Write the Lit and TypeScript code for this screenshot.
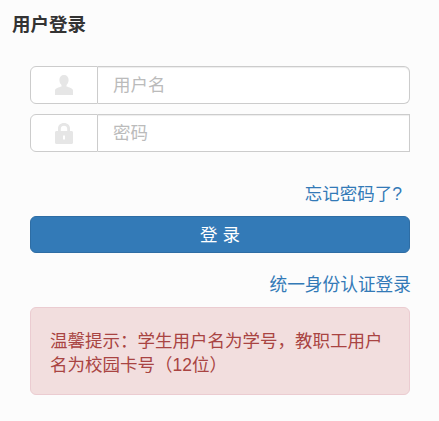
import { LitElement, html, css } from "lit";
import { customElement } from "lit/decorators.js";

@customElement("app-root")
export class AppRoot extends LitElement {
  static styles = css`
    :host {
      display: block;
      width: 439px;
      height: 421px;
      background: #fcfcfc;
      font-family: "Liberation Sans", "Noto Sans CJK SC", sans-serif;
      box-sizing: border-box;
      overflow: hidden;
    }
    .title {
      margin: 0;
      padding: 12px 0 0 12px;
      font-size: 18.5px;
      line-height: 26px;
      font-weight: 700;
      color: #333;
    }
    .form {
      display: flex;
      flex-direction: column;
      margin: 28px 29px 0 30px;
    }
    .group {
      display: flex;
      height: 38px;
      box-sizing: border-box;
      margin-bottom: 10px;
    }
    .addon {
      width: 68px;
      box-sizing: border-box;
      flex: none;
      display: flex;
      align-items: center;
      justify-content: center;
      border: 1px solid #ccc;
      border-radius: 6px 0 0 6px;
      background: #fff;
    }
    .input {
      flex: 1;
      box-sizing: border-box;
      border: 1px solid #ccc;
      border-left: 0;
      background: #fff;
      box-shadow: inset 0 1px 1px rgba(0, 0, 0, 0.075);
      padding-left: 15px;
      font-size: 17.5px;
      line-height: 36px;
      color: #bbb;
    }
    .input.round {
      border-radius: 0 6px 6px 0;
    }
    .forgot {
      align-self: flex-end;
      margin: 19px 8px 0 0;
      font-size: 17.5px;
      line-height: 26px;
      color: #337ab7;
    }
    .btn {
      margin-top: 9px;
      height: 37px;
      box-sizing: border-box;
      border: 1px solid #2e6da4;
      border-radius: 6px;
      background: #337ab7;
      color: #fff;
      font-size: 17.5px;
      line-height: 24px;
      display: flex;
      align-items: center;
      justify-content: center;
    }
    .unified {
      align-self: flex-end;
      margin: 19px -1px 0 0;
      font-size: 17.7px;
      line-height: 26px;
      color: #337ab7;
    }
    .alert {
      margin-top: 9px;
      box-sizing: border-box;
      height: 88px;
      padding: 21px 19px 0;
      border: 1px solid #ebccd1;
      border-radius: 6px;
      background: #f2dede;
      color: #a94442;
      font-size: 17.5px;
      line-height: 24px;
    }
  `;

  render() {
    return html`
      <h1 class="title">用户登录</h1>
      <div class="form">
        <div class="group">
          <div class="addon">
            <svg width="18" height="20" viewBox="0 0 18 20">
              <path
                fill="#e6e6e6"
                d="M9 0c2.900 0 4.600 2.100 4.600 5 0 2.200-.9 4-2.100 5v1.600c2.600.9 6.500 1.600 6.500 4.200V20H0v-4.200c0-2.600 3.900-3.300 6.500-4.200V10C5.300 9 4.400 7.200 4.400 5 4.400 2.100 6.100 0 9 0z"
              />
            </svg>
          </div>
          <div class="input round">用户名</div>
        </div>
        <div class="group">
          <div class="addon">
            <svg width="18" height="21" viewBox="0 0 18 21">
              <path
                fill="#e6e6e6"
                fill-rule="evenodd"
                d="M9 0c3.600 0 6 2.300 6 5.500V8h1.500C17.400 8 18 8.600 18 9.500v10c0 .9-.6 1.500-1.500 1.500h-15C.6 21 0 20.400 0 19.500v-10C0 8.600.6 8 1.500 8H3V5.500C3 2.300 5.400 0 9 0zm0 2.800C7.100 2.800 5.800 4 5.800 5.700V8h6.400V5.700C12.200 4 10.900 2.800 9 2.800zM8 12.500v4h2v-4z"
              />
            </svg>
          </div>
          <div class="input">密码</div>
        </div>
        <div class="forgot">忘记密码了?</div>
        <div class="btn">登 录</div>
        <div class="unified">统一身份认证登录</div>
        <div class="alert">温馨提示：学生用户名为学号，教职工用户名为校园卡号（12位）</div>
      </div>
    `;
  }
}
